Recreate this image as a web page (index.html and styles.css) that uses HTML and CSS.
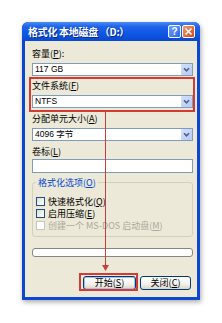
FILE: index.html
```html
<!DOCTYPE html>
<html lang="zh-CN">
<head>
<meta charset="utf-8">
<title>格式化 本地磁盘 (D:)</title>
<link rel="stylesheet" href="styles.css">
</head>
<body>
<div class="window">
  <div class="titlebar">
    <span class="title">格式化 本地磁盘 （D:）</span>
    <div class="tbtns">
      <span class="tb help">?</span>
      <span class="tb close"><svg width="11" height="11" viewBox="0 0 11 11"><path d="M2.5 2.5L8.5 8.5M8.5 2.5L2.5 8.5" stroke="#fff" stroke-width="1.6" fill="none"/></svg></span>
    </div>
  </div>
  <div class="client">
    <div class="label">容量(<u>P</u>):</div>
    <div class="select"><span class="val">117 GB</span><span class="arrow"><svg width="11" height="11" viewBox="0 0 11 11"><path d="M3 4.2L5.5 6.8L8 4.2" stroke="#4d6185" stroke-width="1.6" fill="none"/></svg></span></div>
    <div class="hl">
      <div class="label">文件系统(<u>F</u>)</div>
      <div class="select"><span class="val">NTFS</span><span class="arrow"><svg width="11" height="11" viewBox="0 0 11 11"><path d="M3 4.2L5.5 6.8L8 4.2" stroke="#4d6185" stroke-width="1.6" fill="none"/></svg></span></div>
    </div>
    <div class="label gap1">分配单元大小(<u>A</u>)</div>
    <div class="select"><span class="val">4096 字节</span><span class="arrow"><svg width="11" height="11" viewBox="0 0 11 11"><path d="M3 4.2L5.5 6.8L8 4.2" stroke="#4d6185" stroke-width="1.6" fill="none"/></svg></span></div>
    <div class="label gap5">卷标(<u>L</u>)</div>
    <div class="input"></div>
    <fieldset class="group">
      <legend>格式化选项(<u>O</u>)</legend>
      <div class="cb first"><span class="box"></span><span>快速格式化(<u>Q</u>)</span></div>
      <div class="cb"><span class="box"></span><span>启用压缩(<u>E</u>)</span></div>
      <div class="cb disabled"><span class="box"></span><span>创建一个 MS-DOS 启动盘(<u>M</u>)</span></div>
    </fieldset>
    <div class="progress"></div>
    <div class="buttons">
      <button class="btn default">开始(<u>S</u>)<span class="mark"></span></button>
      <button class="btn">关闭(<u>C</u>)</button>
    </div>
  </div>
  <svg class="pointer" width="9" height="160" viewBox="0 0 9 160"><line x1="4.5" y1="0" x2="4.5" y2="154" stroke="#c9403a" stroke-width="1"/><polygon points="1,153 8,153 4.5,159" fill="#c9403a"/></svg>
</div>
</body>
</html>
```

FILE: styles.css
```css
* { box-sizing: border-box; }
html, body { margin: 0; padding: 0; }
body {
  width: 222px;
  height: 323px;
  overflow: hidden;
  background: #fff;
  font-family: "Noto Sans CJK SC", "Liberation Sans", sans-serif;
  font-size: 9px;
  color: #000;
}
.window {
  position: relative;
  margin: 22px 0 0 22px;
  width: 178px;
  display: flex;
  flex-direction: column;
  background: #0b48cf;
  border-radius: 6px 6px 0 0;
  padding: 0 3px 3px;
  box-shadow: 1px 2px 5px rgba(0, 0, 0, 0.35);
}
.titlebar {
  height: 19px;
  margin: 0 -3px;
  padding: 0 5px 0 6px;
  display: flex;
  align-items: center;
  justify-content: space-between;
  border-radius: 6px 6px 0 0;
  background: linear-gradient(#4a8cf5, #1d62e9 25%, #0c54e1 70%, #0a48d0);
}
.title {
  color: #fff;
  font-weight: bold;
  font-size: 10px;
  letter-spacing: -0.3px;
  line-height: 19px;
  white-space: nowrap;
  text-shadow: 1px 1px 0 #0a2a8a;
}
.tbtns { display: flex; gap: 1px; }
.tb {
  width: 13px;
  height: 13px;
  border: 1px solid #fff;
  border-radius: 2px;
  display: flex;
  align-items: center;
  justify-content: center;
}
.help {
  background: linear-gradient(135deg, #6aa5ff, #2a66e8);
  color: #fff;
  font: bold 10px/11px "Liberation Sans", sans-serif;
}
.close { background: linear-gradient(135deg, #f39a70, #d8461f); }
.client {
  background: #ece9d8;
  padding: 7px 4px 7px 7px;
  display: flex;
  flex-direction: column;
}
.label {
  height: 11px;
  line-height: 11px;
  white-space: nowrap;
}
.gap1 { margin-top: 1px; }
.gap5 { margin-top: 5px; }
.select {
  height: 13px;
  margin-top: 4px;
  border: 1px solid #7f9db9;
  background: #fff;
  display: flex;
  align-items: center;
  justify-content: space-between;
  padding-left: 2px;
}
.val {
  font-family: "Liberation Sans", "Noto Sans CJK SC", sans-serif;
  font-size: 8.5px;
  line-height: 11px;
  white-space: nowrap;
}
.arrow {
  width: 11px;
  height: 11px;
  background: linear-gradient(135deg, #d4e1fd, #b5c9f5);
  border-radius: 1px;
  display: flex;
}
.hl {
  margin: 1px -2px 0 -3px;
  border: 2px solid #d43b36;
  padding: 1px 0 2px 1px;
}
.input {
  height: 14px;
  margin-top: 2px;
  border: 1px solid #7f9db9;
  background: #fff;
}
.group {
  margin: 4px 0 0;
  padding: 0 3px 5px;
  border: 1px solid #d0d0bf;
  border-radius: 3px;
  min-width: 0;
}
.group legend {
  padding: 0 2px;
  margin-left: 0;
  line-height: 11px;
  color: #0046d5;
}
.cb {
  display: flex;
  align-items: center;
  gap: 3px;
  height: 11px;
  line-height: 11px;
  margin-top: 1px;
  white-space: nowrap;
}
.cb.first { margin-top: 8px; }
.box {
  width: 9px;
  height: 9px;
  border: 1px solid #1c5180;
  background: linear-gradient(135deg, #dcdcd7, #fff);
}
.cb.disabled { color: #aca899; }
.cb.disabled .box { border-color: #cac8bb; background: #fff; }
.progress {
  height: 9px;
  margin-top: 11px;
  border: 1px solid #868686;
  border-radius: 3px;
  background: #fff;
}
.buttons {
  margin-top: 19px;
  display: flex;
  justify-content: flex-end;
  gap: 4px;
  padding-right: 2px;
}
.btn {
  position: relative;
  width: 51px;
  height: 14px;
  padding: 0;
  border: 1px solid #003c74;
  border-radius: 3px;
  background: linear-gradient(#ffffff, #f2f1ec 60%, #d8d4c8);
  font-family: "Noto Sans CJK SC", sans-serif;
  font-size: 9px;
  line-height: 12px;
  color: #000;
}
.btn.default {
  width: 53px;
  box-shadow: inset 0 0 0 1px #a6c0ec;
}
.mark {
  position: absolute;
  left: -5px;
  top: -4px;
  right: -3px;
  bottom: -2px;
  border: 2px solid #d43b36;
}
.pointer {
  position: absolute;
  left: 79px;
  top: 90px;
  z-index: 2;
}
```
